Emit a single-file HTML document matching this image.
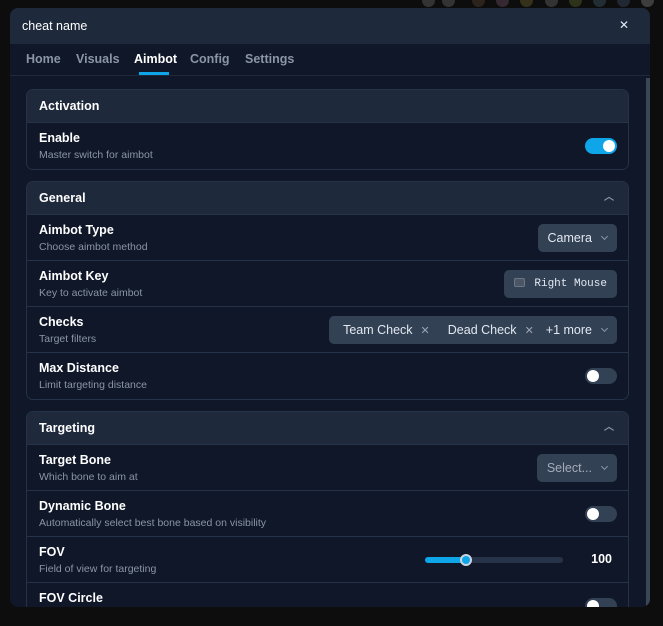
<!DOCTYPE html>
<html><head><meta charset="utf-8">
<style>
*{box-sizing:border-box;margin:0;padding:0}
body{width:663px;height:626px;background:#0d0d0d;font-family:"Liberation Sans",sans-serif;position:relative;overflow:hidden}
.dots{position:absolute;top:0;left:0;width:663px;height:12px}
.dots span{position:absolute;top:-6px;width:13px;height:13px;border-radius:50%;background:#333}
.win{position:absolute;left:10px;top:8px;width:640px;height:599px;background:#0f1729;border-radius:8px;overflow:hidden}
.hdr{height:36px;background:#1e293b;display:flex;align-items:center;padding-left:12px;color:#fff;font-size:12.5px}
.x{position:absolute;right:21px;top:10px;color:#e2e8f0;font-size:12px}
.tabs{height:32px;border-bottom:1px solid #1e293b;position:relative}
.tab{position:absolute;top:0;color:#8b95a5;font-size:12.5px;font-weight:bold;line-height:31px}
.tab.a{color:#fff}
.ul{position:absolute;left:129px;width:30px;bottom:0;height:3px;background:#0ea5e9}
.sb{position:absolute;right:0;top:70px;width:4px;height:529px;background:#3b4657}
.card{position:absolute;left:16px;width:603px;border:1px solid #253247;border-radius:7px;overflow:hidden;background:#0f1729}
.ch{height:33px;background:#1e293b;border-bottom:1px solid #253247;color:#fff;font-size:12.5px;font-weight:bold;padding-left:12px;line-height:32px;position:relative}
.ch .car{position:absolute;right:14px;top:0;color:#8b95a5;font-size:10px}
.row{height:46px;border-bottom:1px solid #253247;position:relative;padding:7px 12px}
.row:last-child{border-bottom:none}
.t{color:#fff;font-size:12.5px;font-weight:bold;line-height:16px}
.d{color:#8b95a5;font-size:10.5px;line-height:16px;margin-top:1px}
.tg{position:absolute;right:11px;top:15px;width:32px;height:16px;border-radius:8px;background:#334155}
.tg:after{content:"";position:absolute;left:2px;top:2px;width:12px;height:12px;border-radius:50%;background:#fff}
.tg.on{background:#0ea5e9}.tg.on:after{left:18px}
.sel{position:absolute;right:11px;top:9px;height:28px;border-radius:5px;background:#334155;color:#e2e8f0;font-size:12.5px;line-height:28px;padding:0 10px}
.chev{display:inline-block;width:5px;height:5px;border-right:1.2px solid #8b95a5;border-bottom:1.2px solid #8b95a5;transform:rotate(45deg);margin-left:10px;position:relative;top:-3px}
.mono{font-family:"Liberation Mono",monospace;font-size:11px}
.kb{display:inline-block;width:11px;height:9px;border:1.5px solid #6b7788;border-radius:2px;background:#4b5563;margin-right:9px;vertical-align:-1px}
.xs{color:#9aa4b2;font-size:11px;margin:0 18px 0 8px}
</style></head><body>
<div class="dots">
<span style="left:422px"></span><span style="left:442px"></span><span style="left:472px;background:#2d231d"></span><span style="left:496px;background:#352830"></span><span style="left:520px;background:#35301a"></span><span style="left:545px"></span><span style="left:569px;background:#2d331a"></span><span style="left:593px;background:#222d33"></span><span style="left:617px;background:#222833"></span><span style="left:641px;background:#3d3d3d"></span>
</div>
<div class="win">
<div class="hdr">cheat name</div>
<div class="x">✕</div>
<div class="tabs">
<div class="tab" style="left:16px">Home</div><div class="tab" style="left:66px">Visuals</div><div class="tab a" style="left:124px">Aimbot</div><div class="tab" style="left:180px">Config</div><div class="tab" style="left:235px">Settings</div>
<div class="ul"></div>
</div>
<div class="sb"></div>

<div class="card" style="top:81px">
<div class="ch">Activation</div>
<div class="row"><div class="t">Enable</div><div class="d">Master switch for aimbot</div><div class="tg on"></div></div>
</div>

<div class="card" style="top:173px">
<div class="ch">General<span class="car">︿</span></div>
<div class="row"><div class="t">Aimbot Type</div><div class="d">Choose aimbot method</div><div class="sel">Camera<span class="chev"></span></div></div>
<div class="row"><div class="t">Aimbot Key</div><div class="d">Key to activate aimbot</div><div class="sel mono"><span class="kb"></span>Right Mouse</div></div>
<div class="row"><div class="t">Checks</div><div class="d">Target filters</div><div class="sel" style="padding-left:14px">Team Check<span class="xs">✕</span>Dead Check<span class="xs" style="margin-right:12px">✕</span>+1 more<span class="chev"></span></div></div>
<div class="row"><div class="t">Max Distance</div><div class="d">Limit targeting distance</div><div class="tg"></div></div>
</div>

<div class="card" style="top:403px;height:210px">
<div class="ch">Targeting<span class="car">︿</span></div>
<div class="row"><div class="t">Target Bone</div><div class="d">Which bone to aim at</div><div class="sel" style="color:#a3acb9">Select...<span class="chev"></span></div></div>
<div class="row"><div class="t">Dynamic Bone</div><div class="d">Automatically select best bone based on visibility</div><div class="tg"></div></div>
<div class="row"><div class="t">FOV</div><div class="d">Field of view for targeting</div>
<div style="position:absolute;left:398px;top:20px;width:138px;height:6px;border-radius:3px;background:#253247"></div>
<div style="position:absolute;left:398px;top:20px;width:42px;height:6px;border-radius:3px;background:#0ea5e9"></div>
<div style="position:absolute;left:433px;top:17px;width:12px;height:12px;border-radius:50%;background:#0ea5e9;border:2px solid #cbd5e1"></div>
<div style="position:absolute;right:16px;top:15px;color:#fff;font-size:12.5px;font-weight:bold">100</div>
</div>
<div class="row"><div class="t">FOV Circle</div><div class="tg"></div></div>
</div>
</div>
</body></html>
